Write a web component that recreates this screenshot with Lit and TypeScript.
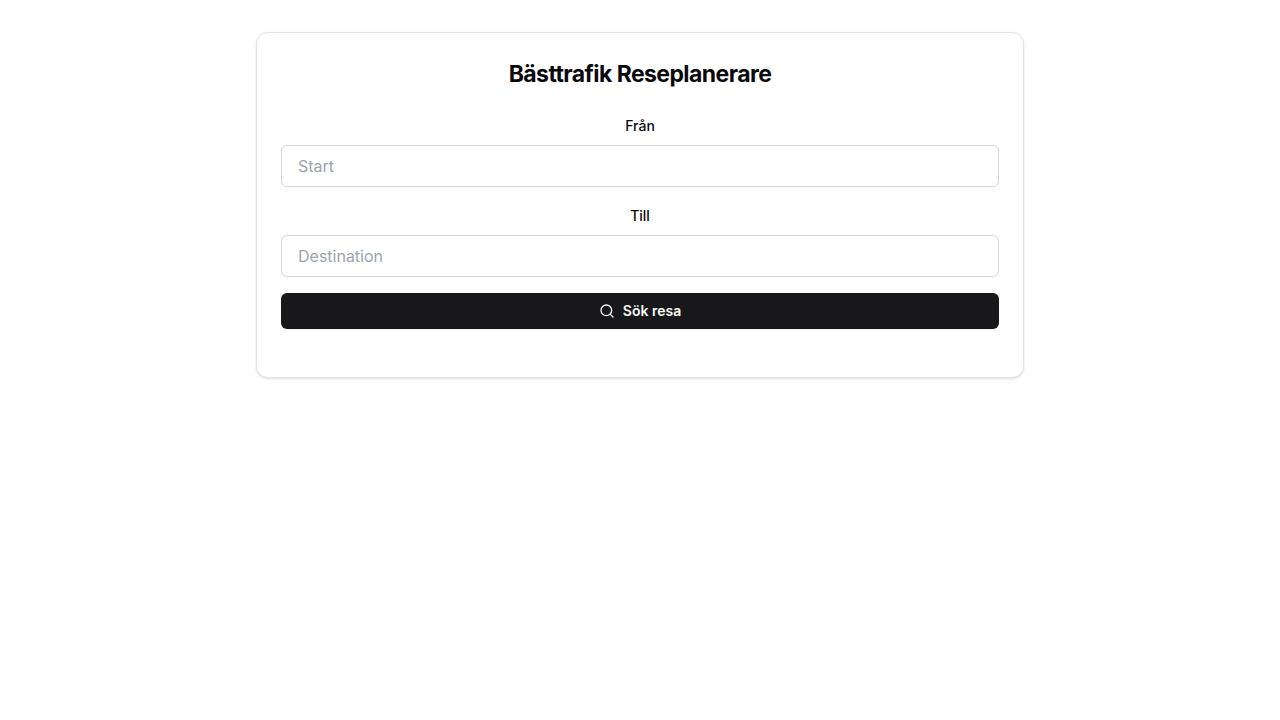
import { LitElement, html, css } from "lit";
import { customElement } from "lit/decorators.js";

@customElement("app-root")
export class AppRoot extends LitElement {
  static styles = css`
    :host {
      display: block;
      padding: 32px 16px;
      font-family: Inter, "Liberation Sans", sans-serif;
      font-size: 16px;
      line-height: 24px;
      color: #09090b;
      background: #fff;
    }
    * { box-sizing: border-box; }
    .card {
      max-width: 768px;
      margin: 0 auto;
      border: 1px solid #e4e4e7;
      border-radius: 12px;
      background: #fff;
      box-shadow: 0 1px 3px 0 rgb(0 0 0 / 0.1), 0 1px 2px -1px rgb(0 0 0 / 0.1);
    }
    .header { padding: 24px 24px 22px; text-align: center; }
    .title {
      margin: 0;
      font-size: 23px;
      line-height: 34px;
      font-weight: 700;
      letter-spacing: -0.025em;
    }
    .content { padding: 0 24px 48px; }
    .form { display: flex; flex-direction: column; gap: 16px; }
    .field { display: flex; flex-direction: column; gap: 6px; }
    .label {
      font-size: 14px;
      line-height: 26px;
      font-weight: 500;
      text-align: center;
    }
    .input {
      width: 100%;
      padding: 8px 16px;
      border: 1px solid #d1d5db;
      border-radius: 6px;
      background: #fff;
      font: inherit;
      color: inherit;
    }
    .input::placeholder { color: #9ca3af; opacity: 1; }
    .button {
      display: flex;
      align-items: center;
      justify-content: center;
      gap: 8px;
      width: 100%;
      padding: 8px 16px;
      border: 0;
      border-radius: 6px;
      background: #18181b;
      color: #fafafa;
      font: inherit;
      font-size: 14px;
      line-height: 20px;
      font-weight: 600;
      cursor: pointer;
      box-shadow: 0 1px 2px 0 rgb(0 0 0 / 0.05);
    }
    .icon { width: 16px; height: 16px; flex: none; }
  `;

  private submit(event: Event) {
    event.preventDefault();
  }

  render() {
    return html`
      <main class="card">
        <header class="header"><h1 class="title">Bästtrafik Reseplanerare</h1></header>
        <div class="content">
          <form class="form" @submit=${this.submit}>
            <div class="field">
              <label class="label" for="from">Från</label>
              <input class="input" id="from" type="text" placeholder="Start" autocomplete="off" />
            </div>
            <div class="field">
              <label class="label" for="to">Till</label>
              <input class="input" id="to" type="text" placeholder="Destination" autocomplete="off" />
            </div>
            <button class="button" type="submit">
              <svg
                class="icon"
                viewBox="0 0 24 24"
                fill="none"
                stroke="currentColor"
                stroke-width="2"
                stroke-linecap="round"
                stroke-linejoin="round"
                aria-hidden="true"
              >
                <circle cx="11" cy="11" r="8" />
                <path d="m21 21-4.3-4.3" />
              </svg>
              Sök resa
            </button>
          </form>
        </div>
      </main>
    `;
  }
}
